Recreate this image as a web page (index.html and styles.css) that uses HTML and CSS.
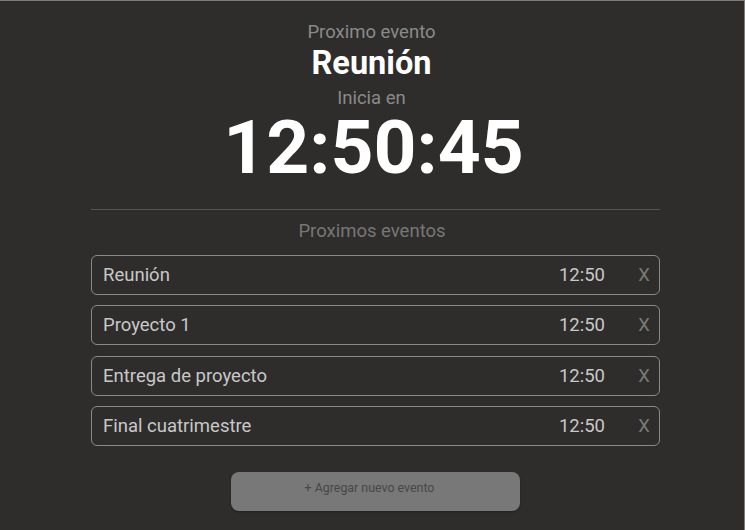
FILE: index.html
```html
<!DOCTYPE html>
<html lang="es">
<head>
<meta charset="utf-8">
<title>Próximo evento</title>
<link rel="stylesheet" href="styles.css">
</head>
<body>
<main class="app">
  <section class="next">
    <div class="label">Proximo evento</div>
    <div class="title">Reunión</div>
    <div class="label starts">Inicia en</div>
    <div class="countdown">12:50:45</div>
  </section>
  <hr class="divider">
  <section class="list">
    <div class="list-title">Proximos eventos</div>
    <div class="event"><span class="name">Reunión</span><span class="time">12:50</span><span class="del">X</span></div>
    <div class="event"><span class="name">Proyecto 1</span><span class="time">12:50</span><span class="del">X</span></div>
    <div class="event"><span class="name">Entrega de proyecto</span><span class="time">12:50</span><span class="del">X</span></div>
    <div class="event"><span class="name">Final cuatrimestre</span><span class="time">12:50</span><span class="del">X</span></div>
  </section>
  <div class="actions"><button class="add">+ Agregar nuevo evento</button></div>
</main>
</body>
</html>
```

FILE: styles.css
```css
html, body {
  margin: 0;
  padding: 0;
  background: #2e2d2b;
}
body {
  font-family: Roboto, "Liberation Sans", sans-serif;
  width: 745px;
  height: 530px;
  overflow: hidden;
}
.app {
  box-sizing: border-box;
  width: 745px;
  height: 530px;
  border-top: 1px solid #7c7c7c;
  border-right: 1px solid #7c7c7c;
  padding: 21px 85px 0 91px;
  display: flex;
  flex-direction: column;
}
.next {
  display: flex;
  flex-direction: column;
  align-items: center;
  padding-right: 7px;
}
.label {
  color: #8a8a8a;
  font-size: 18.5px;
  line-height: 20px;
}
.title {
  color: #ffffff;
  font-weight: 700;
  font-size: 32.5px;
  line-height: 36px;
  margin-top: 3px;
}
.starts {
  margin-top: 7px;
}
.countdown {
  color: #ffffff;
  font-weight: 700;
  font-size: 75px;
  line-height: 70px;
  margin-top: 4px;
  padding-left: 4px;
}
.divider {
  border: 0;
  border-top: 1px solid #555451;
  margin: 27px 0 0;
  width: 569px;
}
.list {
  display: flex;
  flex-direction: column;
  width: 569px;
}
.list-title {
  color: #777775;
  font-size: 18.5px;
  line-height: 20px;
  text-align: center;
  margin: 11px 0 3px;
  padding-right: 7px;
}
.event {
  box-sizing: border-box;
  height: 40px;
  border: 1px solid #8a8a88;
  border-radius: 6px;
  display: flex;
  align-items: center;
  padding: 0 8px 0 11px;
  margin-top: 10.5px;
  font-size: 18.5px;
  color: #c8c8c8;
}
.event:first-of-type { margin-top: 0; }
.name { flex: 1; }
.time { color: #c8c8c8; }
.del {
  color: #7a7a78;
  margin-left: 32px;
  width: 14px;
  text-align: center;
}
.actions {
  display: flex;
  justify-content: center;
  margin-top: 26px;
  width: 569px;
}
.add {
  width: 289px;
  height: 39px;
  border: 0;
  border-radius: 8px;
  background: #787878;
  color: #474747;
  font-family: Roboto, "Liberation Sans", sans-serif;
  font-size: 12.4px;
  padding: 0 12px 8px 0;
  box-shadow: 0 1px 2px rgba(0,0,0,0.3);
}
```
